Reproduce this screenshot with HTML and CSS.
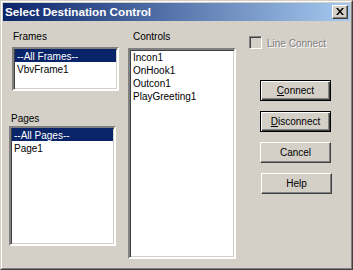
FILE: index.html
```html
<!DOCTYPE html>
<html lang="en">
<head>
  <meta charset="UTF-8" />
  <title>Select Destination Control</title>
  <link rel="stylesheet" href="styles.css">
</head>
<body>
  <div class="window">
    <div class="frame">
      <div class="titlebar">
        <span class="title">Select Destination Control</span>
        <button class="close-btn" aria-label="Close">
          <svg width="8" height="7" viewBox="0 0 8 7">
            <path d="M0 0h2l2 2.5L6 0h2L5 3.5 8 7H6L4 4.5 2 7H0l3-3.5z" fill="#000"/>
          </svg>
        </button>
      </div>

      <div class="content">
        <!-- frames / pages -->
        <div class="col col-left">
          <div class="label label-frames">Frames</div>
          <div class="listbox list-frames">
            <div class="item selected">--All Frames--</div>
            <div class="item">VbvFrame1</div>
          </div>

          <div class="label label-pages">Pages</div>
          <div class="listbox list-pages">
            <div class="item selected">--All Pages--</div>
            <div class="item">Page1</div>
          </div>
        </div>

        <!-- controls -->
        <div class="col col-mid">
          <div class="label label-controls">Controls</div>
          <div class="listbox list-controls">
            <div class="item">Incon1</div>
            <div class="item">OnHook1</div>
            <div class="item">Outcon1</div>
            <div class="item">PlayGreeting1</div>
          </div>
        </div>

        <!-- options and buttons -->
        <div class="col col-right">
          <label class="check disabled">
            <span class="check-box"></span>
            <span class="check-text">Line Connect</span>
          </label>

          <div class="buttons">
            <button class="btn default"><u>C</u>onnect</button>
            <button class="btn default"><u>D</u>isconnect</button>
            <button class="btn">Cancel</button>
            <button class="btn btn-help">Help</button>
          </div>
        </div>
      </div>
    </div>
  </div>
</body>
</html>
```

FILE: styles.css
```css
* {
  box-sizing: border-box;
}

body {
  margin: 0;
  background: #d4d0c8;
  font-family: 'Liberation Sans', Arial, sans-serif;
  font-size: 10px;
  color: #000;
}

.window {
  width: 353px;
  height: 270px;
  border: 1px solid;
  border-color: #d4d0c8 #404040 #404040 #d4d0c8;
}

.frame {
  height: 100%;
  border: 1px solid;
  border-color: #fff #808080 #808080 #fff;
  padding: 1px;
}

.titlebar {
  height: 18px;
  display: flex;
  align-items: center;
  justify-content: space-between;
  padding: 0 2px 0 2px;
  background: linear-gradient(to right, #0a246a, #a6caf0);
}

.title {
  color: #fff;
  font-weight: bold;
  font-size: 11.7px;
  line-height: 18px;
}

.close-btn {
  width: 16px;
  height: 14px;
  padding: 0;
  margin: 0;
  display: flex;
  align-items: center;
  justify-content: center;
  background: #d4d0c8;
  border: 1px solid;
  border-color: #fff #404040 #404040 #fff;
  box-shadow: inset -1px -1px 0 #808080;
}

.close-btn svg {
  display: block;
  margin: 0 0 1px 0;
}

.content {
  display: flex;
  padding-left: 6px;
}

.col {
  display: flex;
  flex-direction: column;
}

.col-left {
  width: 110px;
}

.col-mid {
  width: 108px;
  margin-left: 9px;
}

.col-right {
  margin-left: 13px;
}

.label {
  line-height: 13px;
  height: 13px;
}

.label-frames {
  margin: 9px 0 4px 4px;
}

.label-pages {
  margin: 21px 0 1px 2px;
}

.label-controls {
  margin: 9px 0 5px 5px;
}

.listbox {
  background: #fff;
  border: 2px solid;
  border-color: #808080 #fff #fff #808080;
  box-shadow: inset 1px 1px 0 #404040, inset -1px -1px 0 #d4d0c8;
  padding: 0 1px 0 1px;
}

.list-frames {
  width: 107px;
  height: 44px;
  margin-left: 3px;
}

.list-pages {
  width: 107px;
  height: 120px;
}

.list-controls {
  width: 108px;
  height: 211px;
}

.item {
  height: 13px;
  line-height: 13px;
  padding: 1px 0 0 2px;
  white-space: nowrap;
}

.item.selected {
  background: #0a246a;
  color: #fff;
}

.check {
  display: flex;
  align-items: center;
  margin-top: 15px;
  height: 13px;
}

.check-box {
  width: 13px;
  height: 13px;
  border: 1px solid;
  border-color: #808080 #fff #fff #808080;
  box-shadow: inset 1px 1px 0 #404040, inset -1px -1px 0 #d4d0c8;
  background: #d4d0c8;
}

.check-text {
  margin-left: 5px;
  line-height: 13px;
  padding-top: 1px;
}

.disabled .check-text {
  color: #808080;
  text-shadow: 1px 1px 0 #fff;
}

.buttons {
  display: flex;
  flex-direction: column;
  gap: 10px;
  margin: 31px 0 0 11px;
}

.btn {
  width: 71px;
  height: 21px;
  padding: 0;
  font-family: 'Liberation Sans', Arial, sans-serif;
  font-size: 10px;
  color: #000;
  background: #d4d0c8;
  border: 1px solid;
  border-color: #fff #404040 #404040 #fff;
  box-shadow: inset -1px -1px 0 #808080;
}

.btn.default {
  border: 1px solid #000;
  box-shadow: inset 1px 1px 0 #fff, inset -1px -1px 0 #404040, inset -2px -2px 0 #808080;
}

.btn-help {
  margin-left: 1px;
}
```
